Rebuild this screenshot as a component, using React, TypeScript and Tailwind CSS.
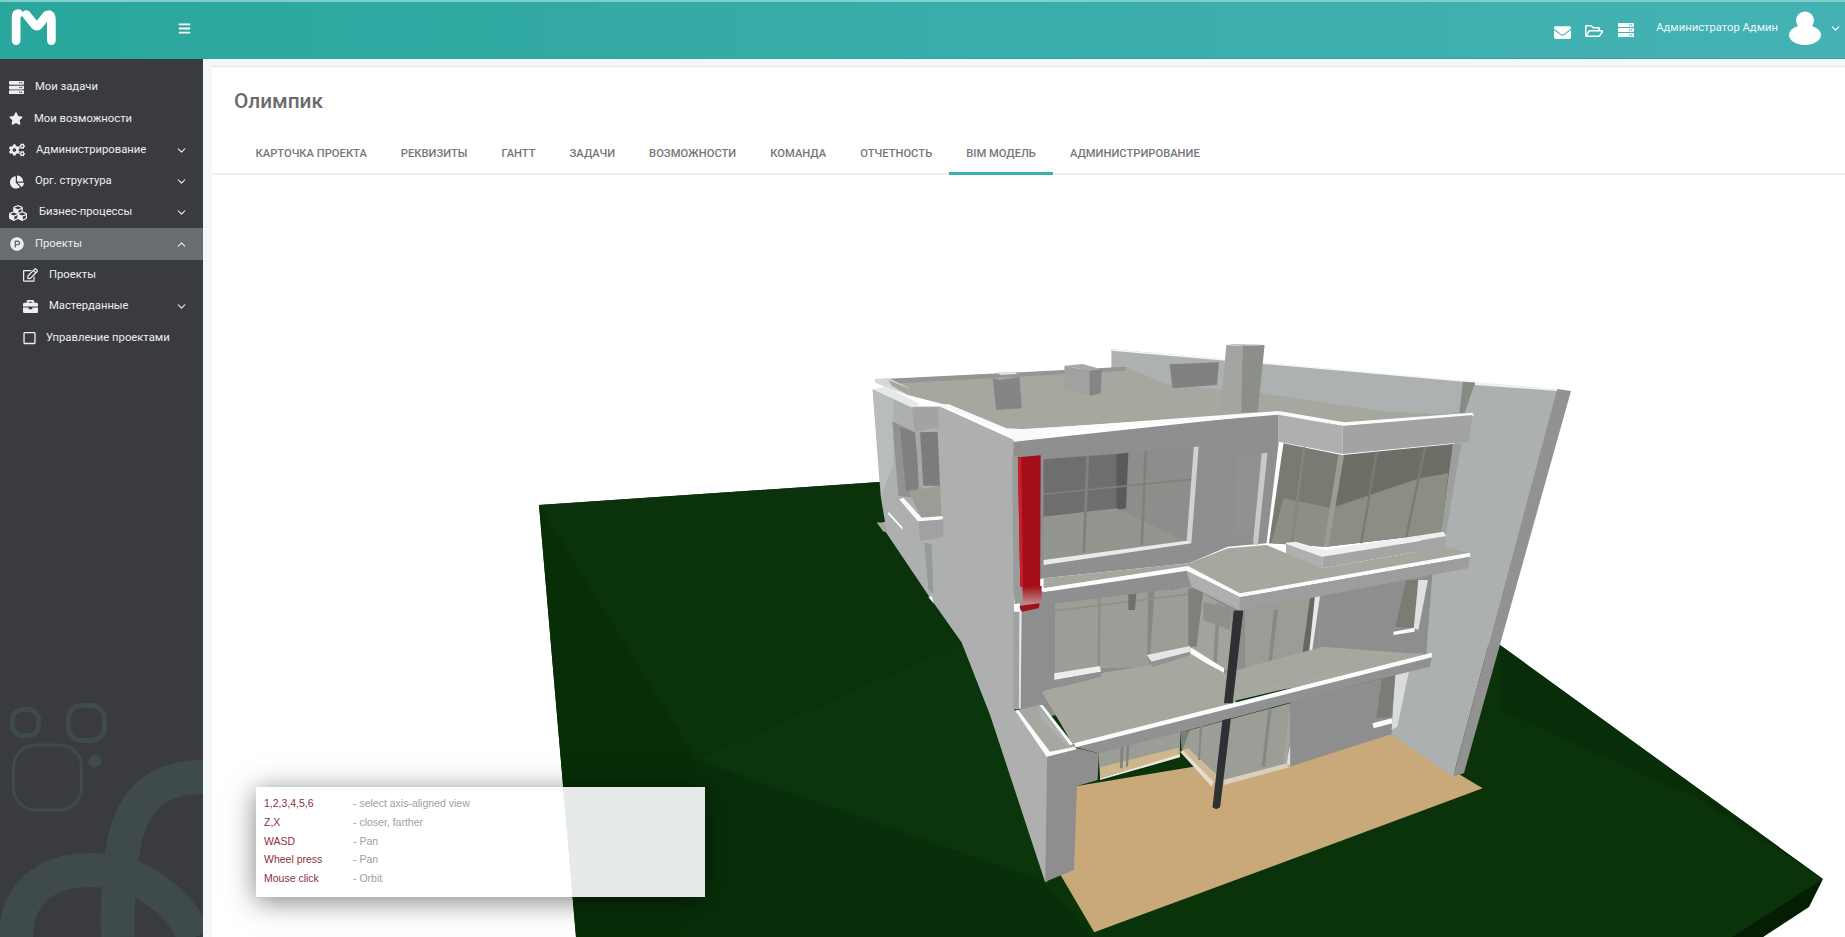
import React from "react";
import {
  FaServer, FaStar, FaCogs, FaChartPie, FaCubes, FaProductHunt, FaRegEdit, FaBriefcase, FaRegSquare,
  FaBars, FaEnvelope, FaRegFolderOpen,
} from "react-icons/fa";
import { ChevronDown, ChevronUp } from "lucide-react";

const P = ({ p, f }: { p: string; f: string }) => <polygon points={p} fill={f} />;

const Z5 = ({ children }: { children: React.ReactNode }) => <g transform="translate(840 330) scale(.4847 .3333)">{children}</g>;
const Z6 = ({ children }: { children: React.ReactNode }) => <g transform="translate(940 580) scale(.3827 .3333)">{children}</g>;
const Z7 = ({ children }: { children: React.ReactNode }) => <g transform="translate(860 360) scale(.3333 .3444)">{children}</g>;
const Z8 = ({ children }: { children: React.ReactNode }) => <g transform="translate(1000 560) scale(.3333)">{children}</g>;

const LIGHT = "#aeb0b0";
const MID = "#8e8e8e";
const SLAB = "#a6a89f";
const WHITE = "#fbfcfc";

function Scene() {
  return (
    <svg viewBox="212 175 1633 762" className="block w-full h-full">
      <defs>
        <linearGradient id="fade" x1="0" y1="0" x2="0" y2="1">
          <stop offset="0" stopColor="#a30e18" />
          <stop offset="1" stopColor="#c08a8e" />
        </linearGradient>
      </defs>
      {/* ground */}
      <P p="539,505 880,482 1000,650 1500,645 1823,879 1763,937 576,937" f="#0a330a" />
      <P p="539,505 697,760 683,937 576,937" f="#082e08" />
      <P p="539,505 880,482 920,590 962,643 697,760" f="#0a320b" />
      <P p="697,760 962,643 1050,800 1040,880" f="#0b350d" />
      <P p="697,760 1040,880 1094,937 683,937" f="#082f09" />
      <P p="1500,645 1823,879 1700,800 1500,710" f="#082e09" />
      <P p="1823,879 1809,907 1763,937 1732,937" f="#031e03" />
      {/* sand */}
      <Z6>
        <P p="358,618 1180,462 1418,625 403,1057 315,885" f="#c9a97a" />
      </Z6>
      {/* back and right walls */}
      <Z5>
        <P p="560,58 1310,155 1310,300 860,240 590,130 560,115" f="#adb1b1" />
        <P p="560,58 1310,153 1310,158 560,62" f="#f5f7f7" />
        <P p="1285,155 1312,158 1300,250 1278,250" f="#888b83" />
      </Z5>
      <polygon points="1475,383 1557,390 1453,777 1391,734 1400,600" fill="#adb0b0" />
      <polygon points="1557,389 1571,391 1464,773 1453,777" fill="#929292" />
      <polygon points="1475,382 1557,389 1557,391 1475,385" fill="#eef0f0" />
      {/* left wall and wing */}
      <Z7>
        <P p="38,85 155,135 240,135 462,232 462,1015 565,1150 562,1515 555,1515 390,1030 305,820 210,690 60,475 75,470 62,395" f={LIGHT} />
        <P p="38,85 100,110 100,300 65,395" f="#b8bcbd" />
        <P p="50,472 75,472 82,500 70,498" f={SLAB} />
        <P p="97,178 155,205 170,400 115,395" f="#909392" />
        <P p="120,195 165,210 185,400 138,380" f="#7e8180" />
        <P p="168,208 180,208 192,445 180,440" f="#a5a8a5" />
        <P p="180,210 233,208 240,365 190,365" f="#7b7c7b" />
        <P p="145,380 240,365 245,455 185,460" f="#9b9d95" />
        <P p="118,405 130,400 185,458 248,453 248,463 175,470" f={WHITE} />
        <P p="175,468 250,463 250,515 180,525" f="#a0a2a2" />
        <P p="85,440 127,485 127,493 85,448" f={WHITE} />
        <P p="193,530 215,535 220,680 205,665" f="#979a9a" />
        <P p="205,688 215,685 222,708" f={WHITE} />
      </Z7>
      {/* second-floor front wall */}
      <Z8>
        <P p="60,100 960,30 960,375 130,470 60,450" f={MID} />
        <P p="165,128 575,75 570,260 440,285 450,320 305,325 165,340" f="#9b9e97" />
        <P p="295,110 302,110 300,322 293,322" f="#8c8f88" />
        <P p="445,82 465,80 450,285 442,285" f="#868983" />
        <P p="165,150 570,100 570,105 165,155" f="#8e918a" />
        <P p="385,92 410,90 405,150 385,150" f="#6f706e" />
        <P p="490,75 555,68 570,78 515,90" f="#7d7f7a" />
        <P p="580,85 695,150 690,340 575,265" f="#a1a39d" />
        <P p="565,85 610,90 590,260 565,260" f="#7e807c" />
        <P p="650,130 662,135 650,310 640,305" f="#8a8d87" />
        <P p="610,125 695,145 690,210 610,180" f="#8e908b" />
        <P p="125,395 300,340 450,315 570,290 680,370 710,430 960,362 960,375 225,560" f={SLAB} />
        <P p="163,340 300,318 303,335 163,360" f="#eceeee" />
        <P p="165,360 303,335 303,360 175,385" f="#909090" />
        <P p="440,285 570,258 572,275 455,305" f="#e5e7e6" />
        <P p="455,305 572,275 570,300 455,322" f="#939393" />
        <P p="572,262 672,325 672,345 570,280" f={WHITE} />
        <P p="570,280 672,345 672,375 572,305" f="#adb0ae" />
        <P p="735,150 945,110 925,300 735,345" f="#9a9d96" />
        <P p="822,150 835,148 815,310 805,312" f="#878a84" />
        <P p="930,115 945,110 925,300 905,295" f="#666860" />
        <P p="945,110 960,108 932,305 925,300" f="#e8eaea" />
        <P p="733,345 925,298 932,315 733,358" f={WHITE} />
        <P p="60,150 120,145 125,395 115,435 118,468 80,478 60,450" f={MID} />
        <P p="40,155 60,155 60,448 40,448" f="#a0a2a2" />
        <P p="58,150 65,150 62,445 57,445" f="#e6e8e8" />
      </Z8>
      <Z6>
        <P p="993,-10 1290,-70 1270,230 993,330" f={MID} />
        <P p="1218,0 1250,0 1238,145 1190,140" f="#7b7d75" />
        <P p="1250,0 1275,0 1250,150 1238,145" f="#dfe1e1" />
        <P p="1185,155 1240,143 1240,155 1185,165" f={WHITE} />
        <P p="1285,225 1250,220 775,325 745,280 1000,200" f={SLAB} />
      </Z6>
      {/* ground floor */}
      <Z8>
        <P p="295,575 540,510 540,580 300,650" f="#9b9e96" />
        <P p="300,622 535,563 540,585 300,655" f="#cfb68e" />
        <P p="300,655 540,583 540,592 300,660" f="#eee8dd" />
        <P p="362,560 370,558 368,625 360,625" f="#7f827c" />
        <P p="380,555 388,553 384,620 378,620" f="#82857f" />
        <P p="540,515 570,510 565,565 545,572" f="#7a7c78" />
        <P p="570,510 870,430 860,610 670,660 545,575" f="#9b9e97" />
        <P p="545,572 640,670 670,662 565,565" f="#cdb898" />
        <P p="540,575 550,572 640,665 635,680" f="#e4dccd" />
        <P p="805,450 815,448 795,620 785,620" f="#868983" />
        <P p="600,495 607,495 600,600 594,600" f="#868983" />
        <P p="670,660 860,610 868,622 672,675" f="#d8cfbf" />
        <P p="890,425 905,420 875,620 860,610" f="#dee0e0" />
        <P p="870,430 890,425 860,610 850,610" f="#a3a59f" />
      </Z8>
      <Z6>
        <P p="915,365 1190,285 1180,462 915,560" f={MID} />
        <P p="1155,290 1190,285 1180,410 1140,415" f="#7b7d75" />
        <P p="1190,285 1225,275 1195,440 1180,450" f="#dadcdc" />
        <P p="1130,430 1180,415 1182,430 1133,445" f={WHITE} />
        <P p="350,500 1285,232 1280,260 1190,285 940,360 650,450 415,520" f="#919191" />
        <P p="268,335 420,290 560,260 655,225 745,280 775,325 1250,220 1285,225 760,365 350,490 340,480" f={SLAB} />
        <P p="350,490 1285,218 1285,232 355,502" f={WHITE} />
        <P p="280,525 358,505 415,520 412,600 358,618 350,870 275,905" f={MID} />
      </Z6>
      <Z8>
        <P p="45,452 118,435 230,565 140,590" f={SLAB} />
        <P p="118,445 210,555 200,558 118,468" f={LIGHT} />
        <P p="45,452 55,450 150,575 225,560 230,568 140,590" f={WHITE} />
        <P p="118,435 128,435 220,552 210,556" f={WHITE} />
      </Z8>
      {/* black column */}
      <Z6>
        <P p="768,92 792,92 765,370 742,370" f="#2f3033" />
        <P p="738,420 760,415 732,682 722,688 712,682" f="#2f3033" />
      </Z6>
      {/* upper floor */}
      <Z5>
        <P p="100,148 590,112 680,165 870,190 1130,245 1300,255 1040,290 905,250 345,300 220,225 140,195" f={SLAB} />
        <P p="100,146 330,130 590,110 590,122 330,143 100,162" f="#949693" />
        <P p="325,125 360,125 365,132 330,135" f="#dfe2e2" />
        <P p="315,145 370,140 375,235 322,240" f="#858585" />
        <P p="315,145 340,140 375,140 330,150" f="#a2a4a2" />
        <P p="463,107 515,122 515,195 463,180" f="#a0a29f" />
        <P p="515,122 540,118 538,190 515,198" f="#858585" />
        <P p="463,107 500,102 540,118 515,122" f="#a8aaa8" />
        <P p="680,103 782,97 778,165 686,175" f="#818181" />
        <P p="797,42 876,44 830,48" f="#b0b2b0" />
        <P p="797,45 830,48 828,248 785,245" f="#a3a5a3" />
        <P p="830,48 876,45 862,245 828,248" f="#8c8e8a" />
        <P p="358,335 905,250 905,340 880,640 800,650 720,700 420,745 358,770" f="#8f8f8f" />
        <P p="345,295 390,298 425,320 360,335" f="#f2f6f8" />
        <P p="390,298 905,243 905,254 420,312" f={WHITE} />
        <P p="905,243 1040,277 1305,248 1308,258 1040,288 905,254" f={WHITE} />
        <P p="420,388 730,352 715,635 420,690" f="#8b8e8a" />
        <P p="420,388 570,372 570,540 420,560" f="#6e6e6e" />
        <P p="570,372 595,368 590,535 570,540" f="#5a5a5a" />
        <P p="420,560 570,535 715,635 420,690" f="#93968e" />
        <P p="508,378 514,378 506,668 500,668" f="#7f827c" />
        <P p="628,362 634,362 625,645 620,645" f="#7f827c" />
        <P p="420,490 730,445 730,450 420,495" f="#7d807b" />
        <P p="730,350 740,350 725,640 715,635" f="#d0d2d2" />
        <P p="420,690 715,632 725,640 420,705" f="#e9ebeb" />
        <P p="820,375 880,368 860,645 812,610" f="#8f9290" />
        <P p="870,370 882,368 862,645 852,640" f="#c8caca" />
        <P p="905,254 1037,288 1037,372 905,335" f="#adb0af" />
        <P p="1037,288 1305,255 1298,335 1037,372" f="#a2a4a3" />
        <P p="915,340 1035,375 1000,650 885,640" f="#797b73" />
        <P p="915,505 1015,535 1000,650 890,640" f="#8d8f86" />
        <P p="1037,375 1265,342 1240,610 1003,650" f="#6d6e66" />
        <P p="1022,530 1195,445 1255,430 1240,610 1003,650" f="#8c8e85" />
        <P p="1028,375 1040,375 1008,650 998,650" f="#9a9c96" />
        <P p="1105,365 1110,365 1078,640 1073,640" f="#7a7c74" />
        <P p="1205,350 1210,350 1170,625 1165,625" f="#7a7c74" />
        <P p="955,350 960,350 935,640 930,640" f="#85877f" />
        <P p="1265,342 1282,340 1250,610 1240,610" f="#9ca09c" />
        <P p="920,638 940,635 1000,660 1245,605 1250,618 1000,680 920,645" f="#eef0ef" />
        <P p="920,642 995,680 995,715 920,675" f={LIGHT} />
        <P p="995,680 1250,620 1250,650 995,715" f="#a5a6a4" />
        <P p="420,745 720,700 800,655 880,645 995,715 1250,650 1300,670 825,795 718,710 420,775" f={SLAB} />
        <P p="420,775 718,708 825,790 1300,668 1300,680 825,802 716,722 420,787" f={WHITE} />
        <P p="420,787 716,722 725,770 420,825" f="#8f8f8f" />
        <P p="716,722 825,802 825,842 725,770" f={LIGHT} />
        <P p="825,802 1300,680 1296,715 1220,735 985,800 825,842" f="#9c9d9c" />
        <P p="355,380 367,380 372,772 358,772" f="#9a9c9c" />
        <P p="367,382 414,376 413,770 372,772" f="#a30e18" />
        <P p="367,382 374,382 378,772 372,772" f="#c51f2c" />
        <polygon points="358,770 372,770 378,772 378,820 360,822" fill="#989a9a" />
        <polygon points="376,770 416,768 416,820 378,822" fill="url(#fade)" />
        <P p="370,828 412,820 410,835 375,845" f="#a30e18" />
      </Z5>
      {/* wing top, drawn over the roof */}
      <Z7>
        <P p="45,55 85,52 145,80 145,102 85,82 45,65" f="#d5d8d8" />
        <P p="85,58 145,82 145,102 95,75" f="#a4a69f" />
        <P p="38,85 80,78 180,128 155,138" f="#e6e9e9" />
        <P p="155,137 235,137 235,195 165,210" f="#a2a4a4" />
        <P p="235,132 265,128 445,200 510,205 555,225 462,235 445,210" f="#f7f9fa" />
      </Z7>
      <Z6>
        <P p="768,92 792,92 787,140 764,140" f="#2f3033" />
      </Z6>
    </svg>
  );
}

function SidebarArt() {
  return (
    <svg className="absolute left-0 bottom-0 w-[203px] h-[240px]" viewBox="0 697 203 240" fill="none">
      <g stroke="#3f4a4b">
        <rect x="12.5" y="709.5" width="26" height="26" rx="10" strokeWidth="5" />
        <rect x="68.5" y="705.5" width="36" height="35" rx="13" strokeWidth="5" />
        <rect x="13.5" y="745" width="68" height="65" rx="22" strokeWidth="3" />
        <path d="M118 937 C116 830 130 777 203 777" strokeWidth="34" />
        <path d="M16 937 C16 895 45 870 90 870 C140 870 178 900 195 937" strokeWidth="34" />
      </g>
      <circle cx="95" cy="761" r="6.5" fill="#3f4a4b" />
    </svg>
  );
}

const NAV = [
  { t: "Мои задачи", icon: <FaServer className="w-[15px] h-[15px]" />, cls: "ml-[9px] w-[26px]" },
  { t: "Мои возможности", icon: <FaStar className="w-[14px] h-[13px]" />, cls: "ml-[9px] w-[25px]" },
  { t: "Администрирование", icon: <FaCogs className="w-[16px] h-[14px]" />, cls: "ml-[9px] w-[27px]", ch: "d" },
  { t: "Орг. структура", icon: <FaChartPie className="w-[14px] h-[14px]" />, cls: "ml-[10px] w-[25px]", ch: "d" },
  { t: "Бизнес-процессы", icon: <FaCubes className="w-[18px] h-[18px]" />, cls: "ml-[9px] w-[30px]", ch: "d" },
  { t: "Проекты", icon: <FaProductHunt className="w-[14px] h-[14px]" />, cls: "ml-[10px] w-[25px]", ch: "u", active: true },
  { t: "Проекты", icon: <FaRegEdit className="w-[15px] h-[14px]" />, cls: "ml-[23px] w-[26px]" },
  { t: "Мастерданные", icon: <FaBriefcase className="w-[15px] h-[15px]" />, cls: "ml-[23px] w-[26px]", ch: "d" },
  { t: "Управление проектами", icon: <FaRegSquare className="w-[13px] h-[14px]" />, cls: "ml-[23px] w-[23px]" },
];

const TABS = ["Карточка проекта", "Реквизиты", "Гантт", "Задачи", "Возможности", "Команда", "Отчетность", "BIM модель", "Администрирование"];

const LEGEND = [
  ["1,2,3,4,5,6", "- select axis-aligned view"],
  ["Z,X", "- closer, farther"],
  ["WASD", "- Pan"],
  ["Wheel press", "- Pan"],
  ["Mouse click", "- Orbit"],
];

export default function App() {
  return (
    <div className="h-[937px] w-[1845px] overflow-hidden flex flex-col bg-white font-['Roboto',sans-serif]">
      <header className="h-[59px] shrink-0 flex items-center text-white border-t-2 border-t-[#7fd0ca] border-b border-b-[#32a09c] bg-gradient-to-r from-[#29a79c] to-[#44b2b5]">
        <svg viewBox="0 0 60 58" className="w-[60px] h-[56px] ml-[4px] -mt-[2px] shrink-0" fill="none" stroke="#fff" strokeLinecap="round" strokeLinejoin="round">
          <path d="M11.5 41 V17 Q11.5 13 14 13" strokeWidth="9" />
          <path d="M22 14 L31 25 Q33 27 35 25 L43 15 Q48 12 48 20 V41" strokeWidth="9" />
        </svg>
        <FaBars className="ml-[114px] -mt-[4px] w-[13px] h-[13px] text-white" />
        <div className="ml-auto flex items-center">
          <FaEnvelope className="w-[17px] h-[17px] mt-[4px]" />
          <FaRegFolderOpen className="ml-[14px] w-[18px] h-[16px] mt-[2px]" />
          <FaServer className="ml-[15px] w-[16px] h-[16px]" />
          <span className="ml-[22px] -mt-[4px] text-[11.25px] leading-none text-[#eef8f8]">Администратор Админ</span>
          <svg viewBox="0 0 32 34" className="ml-[11px] -mt-[4px] w-[32px] h-[34px]" fill="#fff">
            <circle cx="16" cy="9.5" r="9" />
            <ellipse cx="16" cy="24" rx="16" ry="10" />
          </svg>
          <ChevronDown className="ml-[8px] mr-[3px] -mt-[4px] w-[13px] h-[13px]" strokeWidth={2} />
        </div>
      </header>
      <div className="flex-1 flex min-h-0">
        <aside className="relative w-[203px] shrink-0 bg-[#3a3b40] pt-[13px] overflow-hidden text-[#eeeeee] text-[11.25px]">
          <SidebarArt />
          <nav className="relative">
            {NAV.map((n, i) => (
              <div key={i} className={n.active ? "h-[31.3px] flex items-center bg-[#696c71]" : "h-[31.3px] flex items-center"}>
                <span className={`${n.cls} shrink-0 flex items-center`}>{n.icon}</span>
                <span className="whitespace-nowrap">{n.t}</span>
                {n.ch === "d" && <ChevronDown className="ml-auto mr-[15px] w-[13px] h-[13px]" strokeWidth={2} />}
                {n.ch === "u" && <ChevronUp className="ml-auto mr-[15px] w-[13px] h-[13px]" strokeWidth={2} />}
              </div>
            ))}
          </nav>
        </aside>
        <main className="flex-1 min-w-0 bg-[#f3f7fa] pt-[7px] pl-[9px] flex flex-col">
          <section className="flex-1 min-h-0 bg-white border-t border-t-[#e6e8ea] flex flex-col">
            <h1 className="h-[67px] shrink-0 pl-[22px] pt-[20px] text-[20.8px] leading-[28px] font-medium text-[#6b6b6b]">Олимпик</h1>
            <div className="h-[41px] shrink-0 pl-[26.5px] flex border-b-2 border-b-[#eeeeee]">
              {TABS.map((t) => (
                <div
                  key={t}
                  className={
                    t === "BIM модель"
                      ? "h-[41px] px-[17px] pt-[12px] text-[11.2px] leading-[16px] font-medium uppercase whitespace-nowrap text-[#777777] border-b-[3px] border-b-[#3db0ae]"
                      : "h-[41px] px-[17px] pt-[12px] text-[11.2px] leading-[16px] font-medium uppercase whitespace-nowrap text-[#777777]"
                  }
                >
                  {t}
                </div>
              ))}
            </div>
            <div className="relative flex-1 min-h-0">
              <Scene />
              <div className="absolute left-[44px] bottom-[40px] w-[449px] h-[110px] pt-[8px] pl-[8px] bg-white/90 shadow-[0_4px_26px_rgba(0,0,0,0.5)] font-['Liberation_Sans',sans-serif] text-[10.5px]">
                {LEGEND.map(([a, b]) => (
                  <div key={a} className="flex h-[18.6px] items-center">
                    <span className="w-[89px] text-[#8c2f3a]">{a}</span>
                    <span className="text-[#a0a0a0]">{b}</span>
                  </div>
                ))}
              </div>
            </div>
          </section>
        </main>
      </div>
    </div>
  );
}
